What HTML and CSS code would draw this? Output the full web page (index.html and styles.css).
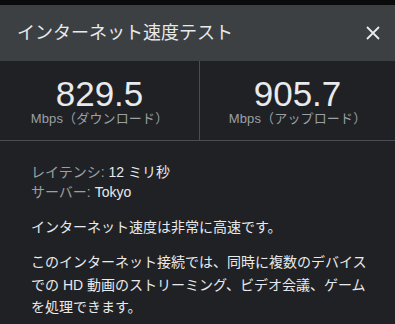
FILE: index.html
```html
<!DOCTYPE html>
<html lang="ja">
<head>
<meta charset="utf-8">
<link rel="stylesheet" href="styles.css">
</head>
<body>
<div class="dialog">
  <header class="header">
    <h1 class="title">インターネット速度テスト</h1>
    <button class="close" aria-label="閉じる">
      <svg width="14" height="14" viewBox="0 0 14 14"><path d="M1 1 L13 13 M13 1 L1 13" stroke="#e8eaed" stroke-width="1.8" fill="none"/></svg>
    </button>
  </header>
  <section class="stats">
    <div class="stat">
      <div class="value">829.5</div>
      <div class="unit">Mbps（ダウンロード）</div>
    </div>
    <div class="stat">
      <div class="value">905.7</div>
      <div class="unit">Mbps（アップロード）</div>
    </div>
  </section>
  <section class="info">
    <div class="meta"><span class="label">レイテンシ: </span>12 ミリ秒</div>
    <div class="meta"><span class="label">サーバー: </span>Tokyo</div>
    <p class="para first">インターネット速度は非常に高速です。</p>
    <p class="para">このインターネット接続では、同時に複数のデバイスでの HD 動画のストリーミング、ビデオ会議、ゲームを処理できます。</p>
  </section>
</div>
</body>
</html>
```

FILE: styles.css
```css
html, body {
  margin: 0;
  padding: 0;
  background: #0a0a0a;
  height: 100%;
  overflow: hidden;
}
body {
  font-family: "Liberation Sans", "Noto Sans CJK JP", sans-serif;
  color: #e8eaed;
  padding-top: 5px;
  box-sizing: border-box;
  text-spacing-trim: space-all;
}
.dialog {
  background: #202124;
  height: 100%;
}
.header {
  height: 56px;
  background: #3c4043;
  display: flex;
  align-items: center;
  justify-content: space-between;
  padding: 0 15px 0 17px;
}
.title {
  margin: 0;
  font-size: 18px;
  font-weight: normal;
  color: #e8eaed;
  line-height: 24px;
}
.close {
  border: 0;
  background: none;
  padding: 0;
  width: 14px;
  height: 14px;
  display: flex;
  margin-top: -1px;
}
.stats {
  display: grid;
  grid-template-columns: 200px 1fr;
  height: 79px;
  border-bottom: 1px solid #4a4d51;
}
.stat {
  display: flex;
  flex-direction: column;
  align-items: center;
  padding-top: 15px;
}
.stat:first-child {
  border-right: 1px solid #4a4d51;
}
.value {
  font-size: 35px;
  line-height: 35px;
  color: #e8eaed;
}
.unit {
  font-size: 13px;
  line-height: 15px;
  color: #9aa0a6;
  letter-spacing: 0.15px;
}
.info {
  padding: 21px 24px 0 31px;
}
.meta {
  font-size: 14px;
  line-height: 20px;
  color: #e8eaed;
}
.label {
  color: #9aa0a6;
}
.para {
  margin: 0;
  font-size: 14px;
  line-height: 22.5px;
  color: #e8eaed;
}
.para.first {
  margin: 14px 0 12.5px;
}
```
